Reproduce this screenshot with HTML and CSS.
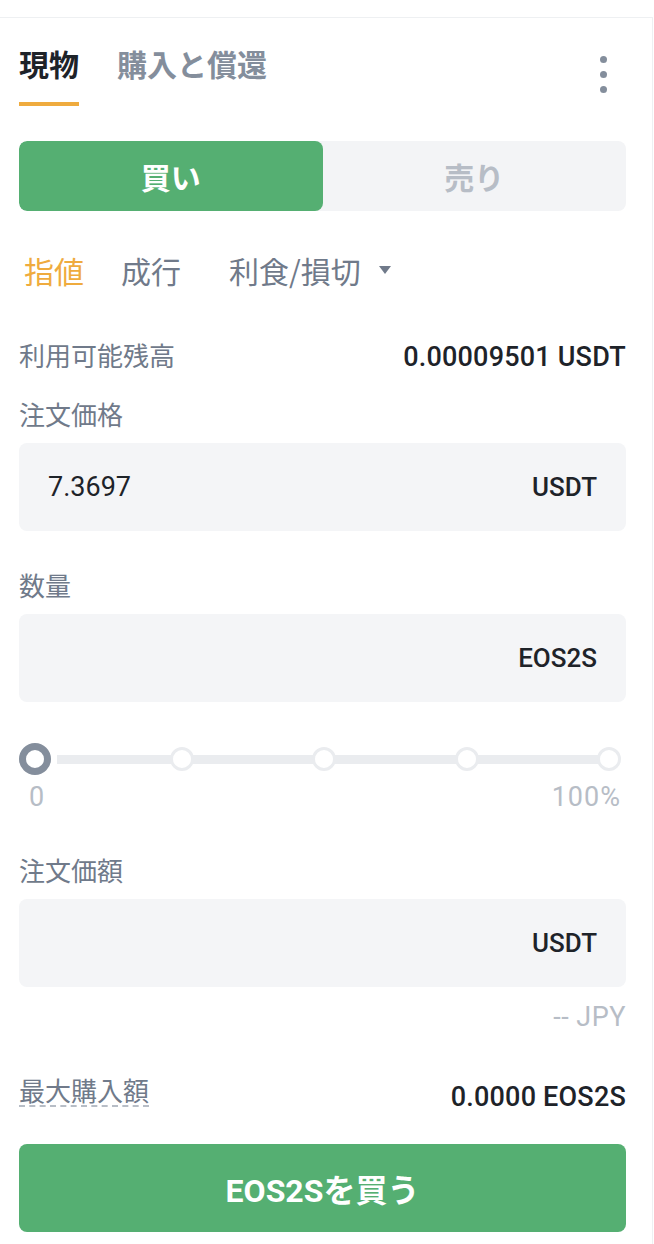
FILE: index.html
```html
<!DOCTYPE html>
<html lang="ja">
<head>
<meta charset="utf-8">
<title>現物取引</title>
<link rel="stylesheet" href="styles.css">
</head>
<body>
<div class="panel">
  <div class="tabs">
    <div class="tab active">現物<span class="tab-line"></span></div>
    <div class="tab">購入と償還</div>
    <div class="kebab"><span></span><span></span><span></span></div>
  </div>

  <div class="toggle">
    <div class="side buy">買い</div>
    <div class="side sell">売り</div>
  </div>

  <div class="types">
    <span class="type active">指値</span>
    <span class="type mkt">成行</span>
    <span class="type">利食/損切</span>
    <span class="caret"></span>
  </div>

  <div class="row balance">
    <span class="label">利用可能残高</span>
    <span class="value">0.00009501 USDT</span>
  </div>

  <div class="label field-label first">注文価格</div>
  <div class="input">
    <span class="num">7.3697</span>
    <span class="unit">USDT</span>
  </div>

  <div class="label field-label">数量</div>
  <div class="input">
    <span class="num"></span>
    <span class="unit">EOS2S</span>
  </div>

  <div class="slider">
    <span class="knob main"></span>
    <span class="knob"></span>
    <span class="knob"></span>
    <span class="knob"></span>
    <span class="knob"></span>
  </div>
  <div class="slider-labels">
    <span>0</span>
    <span>100%</span>
  </div>

  <div class="label field-label total">注文価額</div>
  <div class="input">
    <span class="num"></span>
    <span class="unit">USDT</span>
  </div>
  <div class="jpy">-- JPY</div>

  <div class="row maxrow">
    <span class="label dashed">最大購入額</span>
    <span class="value">0.0000 EOS2S</span>
  </div>

  <button class="submit">EOS2Sを買う</button>
</div>
</body>
</html>
```

FILE: styles.css
```css
* { box-sizing: border-box; }
html, body { margin: 0; padding: 0; background: #fff; }
body {
  font-family: "Noto Sans CJK JP", "Noto Sans", sans-serif;
  color: #1E2329;
}
.panel {
  margin-top: 17px;
  width: 653px;
  border-top: 1px solid #EEF0F2;
  border-right: 1px solid #EEF0F2;
  padding: 0 26px 20px 19px;
}
.tabs {
  display: flex;
  align-items: flex-start;
  padding-top: 25px;
}
.tab {
  font-size: 30px;
  line-height: 40px;
  font-weight: 700;
  color: #848E9C;
  margin-right: 38px;
  display: flex;
  flex-direction: column;
}
.tab.active { color: #1E2329; }
.tab-line {
  display: block;
  height: 4px;
  background: #EFAB3E;
  margin-top: 19px;
}
.kebab {
  margin-left: auto;
  margin-right: 19px;
  margin-top: 13px;
  display: flex;
  flex-direction: column;
  gap: 8px;
}
.kebab span {
  width: 7px; height: 7px; border-radius: 50%;
  background: #848E9C;
}
.toggle {
  margin-top: 35px;
  height: 70px;
  display: flex;
  border-radius: 8px;
  background: #F3F4F6;
  overflow: hidden;
}
.side {
  flex: 1;
  display: flex;
  align-items: center;
  justify-content: center;
  font-size: 30px;
  font-weight: 700;
}
.side.buy { background: #55AF72; color: #fff; border-radius: 8px; }
.side.sell { color: #B7BDC6; }
.types {
  margin-top: 39px;
  display: flex;
  align-items: center;
  padding-left: 5px;
  font-size: 30px;
  line-height: 40px;
  color: #707A8A;
}
.type { margin-right: 37px; }
.type.mkt { margin-right: 48px; }
.type:nth-child(3) { margin-right: 18px; }
.type.active { color: #EFAB3E; }
.caret {
  width: 0; height: 0;
  border-left: 6.5px solid transparent;
  border-right: 6.5px solid transparent;
  border-top: 8px solid #707A8A;
}
.row {
  display: flex;
  justify-content: space-between;
  align-items: baseline;
}
.label {
  font-size: 26px;
  line-height: 36px;
  color: #707A8A;
}
.value {
  font-family: Roboto, "Noto Sans CJK JP", sans-serif;
  font-size: 27px;
  line-height: 36px;
  font-weight: 500;
  letter-spacing: 0.2px;
  color: #1E2329;
}
.balance { margin-top: 47px; }
.field-label { margin-top: 36px; }
.field-label.first { margin-top: 21px; }
.field-label.total { margin-top: 37px; }
.input {
  margin-top: 11px;
  height: 88px;
  border-radius: 8px;
  background: #F4F5F7;
  display: flex;
  align-items: center;
  justify-content: space-between;
  padding: 0 29px;
  font-family: Roboto, "Noto Sans CJK JP", sans-serif;
  font-size: 27px;
}
.num { color: #1E2329; }
.unit { font-weight: 500; font-size: 26px; color: #1E2329; }
.slider {
  position: relative;
  margin-top: 41px;
  height: 32px;
  margin-right: 5px;
  display: flex;
  align-items: center;
  justify-content: space-between;
}
.slider::before {
  content: "";
  position: absolute;
  left: 38px;
  right: 12px;
  top: 12px;
  height: 9px;
  background: #EAECEF;
}
.knob {
  position: relative;
  width: 24px; height: 24px;
  border-radius: 50%;
  background: #fff;
  border: 3px solid #EAECEF;
}
.knob.main {
  width: 32px; height: 32px;
  border: 7px solid #848E9C;
}
.slider-labels {
  margin-top: 4px;
  display: flex;
  justify-content: space-between;
  padding: 0 5px 0 10px;
  font-family: Roboto, sans-serif;
  font-size: 27px;
  letter-spacing: 1px;
  line-height: 36px;
  color: #B7BDC6;
}
.jpy {
  margin-top: 12px;
  text-align: right;
  font-family: Roboto, sans-serif;
  font-size: 27px;
  letter-spacing: 0.5px;
  line-height: 36px;
  color: #B7BDC6;
}
.maxrow {
  margin-top: 40px;
  align-items: flex-start;
}
.maxrow .value { margin-top: 4px; }
.dashed {
  line-height: 30px;
  border-bottom: 2px dashed #B7BDC6;
}
.submit {
  display: block;
  width: 100%;
  margin-top: 29px;
  height: 88px;
  border: none;
  border-radius: 8px;
  background: #55AF72;
  color: #fff;
  font-family: Roboto, "Noto Sans CJK JP", sans-serif;
  font-size: 32px;
  font-weight: 700;
}
```
